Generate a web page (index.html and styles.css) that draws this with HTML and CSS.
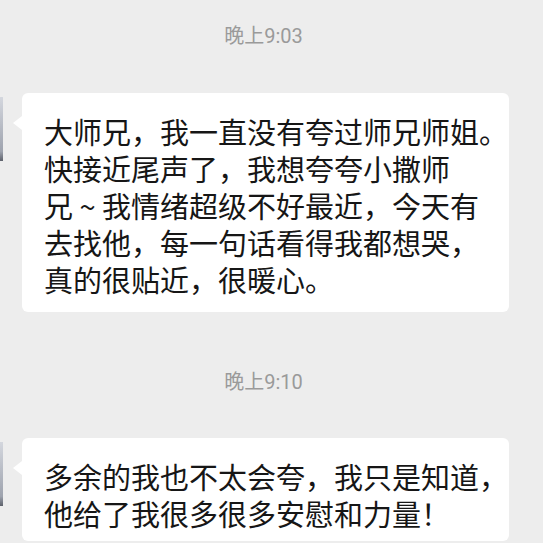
FILE: index.html
```html
<!DOCTYPE html>
<html lang="zh-CN">
<head>
    <meta charset="UTF-8">
    <meta name="viewport" content="width=device-width, initial-scale=1.0">
    <title>聊天记录</title>
    <link rel="stylesheet" href="styles.css">
</head>
<body>

    <div class="chat">
        <div class="time">晚上9:03</div>

        <div class="row">
            <div class="avatar"></div>
            <div class="bubble">
                大师兄，我一直没有夸过师兄师姐。<br>
                快接近尾声了，我想夸夸小撒师<br>
                兄 ~ 我情绪超级不好最近，今天有<br>
                去找他，每一句话看得我都想哭，<br>
                真的很贴近，很暖心。
            </div>
        </div>

        <div class="time time-gap">晚上9:10</div>

        <div class="row">
            <div class="avatar"></div>
            <div class="bubble bubble-last">
                多余的我也不太会夸，我只是知道，<br>
                他给了我很多很多安慰和力量！
            </div>
        </div>
    </div>

</body>
</html>
```
FILE: styles.css
```css
body {
    margin: 0;
    background-color: #ededed;
    font-family: "Noto Sans CJK SC", sans-serif;
    height: 543px;
    overflow: hidden;
}

.chat {
    padding-top: 22px;
}

/* 时间 */
.time {
    font-family: Roboto, "Noto Sans CJK SC", sans-serif;
    font-size: 20px;
    line-height: 28px;
    color: #9a9a9a;
    text-align: center;
    padding-right: 16px;
    margin-bottom: 43px;
}

.time-gap {
    margin-top: 56px;
    margin-bottom: 42px;
}

.row {
    display: flex;
    align-items: flex-start;
}

/* 头像只露出一点边 */
.avatar {
    width: 3px;
    height: 64px;
    margin-top: 4px;
    background: linear-gradient(to bottom, #d4d7de, #9ea3ae 85%, #5d616b);
}

.bubble {
    position: relative;
    margin-left: 19px;
    width: 487px;
    box-sizing: border-box;
    padding: 20px 0 14px 22px;
    background-color: #fff;
    border-radius: 6px;
    font-size: 29px;
    line-height: 37px;
    color: #161616;
    white-space: nowrap;
}

.bubble-last {
    padding-bottom: 9px;
}

/* 小三角 */
.bubble::before {
    content: "";
    position: absolute;
    left: -9px;
    top: 23px;
    border-top: 7px solid transparent;
    border-bottom: 7px solid transparent;
    border-right: 9px solid #fff;
}
```
